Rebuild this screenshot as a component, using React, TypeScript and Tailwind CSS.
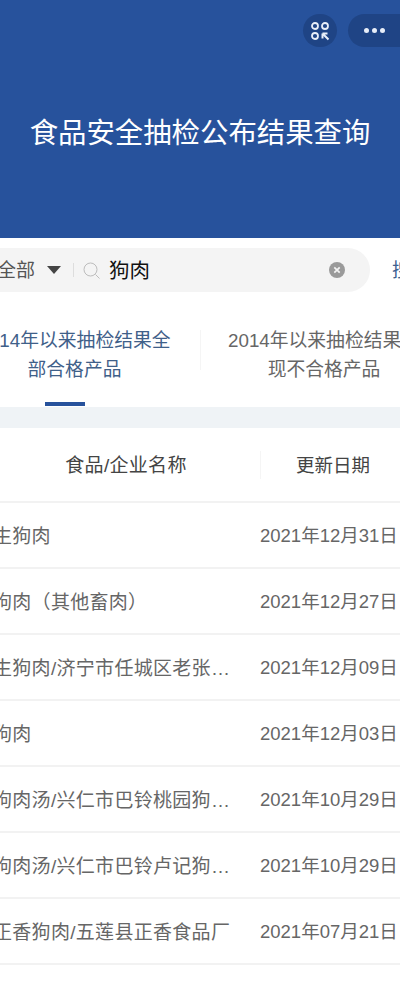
const font = { fontFamily: '"Liberation Sans", "Noto Sans CJK SC", sans-serif' };

const rows: [string, string][] = [
  ["生狗肉", "2021年12月31日"],
  ["狗肉（其他畜肉）", "2021年12月27日"],
  ["生狗肉/济宁市任城区老张…", "2021年12月09日"],
  ["狗肉", "2021年12月03日"],
  ["狗肉汤/兴仁市巴铃桃园狗…", "2021年10月29日"],
  ["狗肉汤/兴仁市巴铃卢记狗…", "2021年10月29日"],
  ["正香狗肉/五莲县正香食品厂", "2021年07月21日"],
];

export default function App() {
  return (
    <div className="w-[400px] h-[982px] overflow-hidden bg-white" style={font}>
      <header className="h-[238px] bg-[#27529c] flex flex-col">
        <div className="flex justify-end pt-[14px] gap-[11px]">
          <div className="w-[34px] h-[33px] rounded-full bg-[#1f4485] flex items-center justify-center">
            <svg width="20" height="20" viewBox="0 0 20 20" fill="none" stroke="#e8eef8" strokeWidth="1.8">
              <circle cx="5" cy="5" r="3" />
              <circle cx="15" cy="5" r="3" />
              <circle cx="5" cy="15" r="3" />
              <path d="M12.5 12.5h5M12.5 12.5v5M13 13l5.5 5.5" strokeWidth="2" />
            </svg>
          </div>
          <div className="w-[70px] h-[33px] -mr-[18px] rounded-full bg-[#1f4485] flex items-center pl-[16px] gap-[3px] shrink-0">
            <span className="w-[5px] h-[5px] rounded-full bg-[#e8eef8]" />
            <span className="w-[5px] h-[5px] rounded-full bg-[#e8eef8]" />
            <span className="w-[5px] h-[5px] rounded-full bg-[#e8eef8]" />
            <span className="ml-[12px] w-px h-[18px] bg-[#3a5f9e]" />
          </div>
        </div>
        <h1 className="mt-[66px] text-center text-white text-[28.4px] leading-[40px] font-normal whitespace-nowrap">
          食品安全抽检公布结果查询
        </h1>
      </header>

      <div className="pt-[10px] flex items-center whitespace-nowrap">
        <div className="-ml-[30px] w-[400px] shrink-0 h-[44px] rounded-full bg-[#f4f4f4] flex items-center pl-[27px]">
          <span className="pt-[3px] text-[19px] text-[#555]">全部</span>
          <svg className="ml-[12px]" width="14" height="8" viewBox="0 0 14 8">
            <path d="M0 0h14L7 8z" fill="#444" />
          </svg>
          <span className="ml-[12px] w-px h-[14px] bg-[#ddd]" />
          <svg className="ml-[9px]" width="17" height="17" viewBox="0 0 17 17" fill="none" stroke="#bdbdbd" strokeWidth="1">
            <circle cx="7.5" cy="7.5" r="6.5" />
            <path d="M12.5 12.5l4 4" />
          </svg>
          <span className="ml-[9px] pt-[3px] text-[20.5px] text-[#111]">狗肉</span>
          <svg className="ml-auto mr-[25px]" width="16" height="16" viewBox="0 0 16 16">
            <circle cx="8" cy="8" r="8" fill="#9a9a9a" />
            <path d="M5.3 5.3l5.4 5.4M10.7 5.3l-5.4 5.4" stroke="#f4f4f4" strokeWidth="1.7" />
          </svg>
        </div>
        <span className="ml-[22px] pt-[3px] text-[19px] text-[#3d6190] shrink-0">搜索</span>
      </div>

      <div className="h-[115px] pt-[34px]">
        <div className="flex -ml-[26px] w-[446px] text-[18.8px] leading-[29px] h-[58px]">
          <div className="w-[201px] shrink-0 text-center text-[#3f6089]">
            <div className="whitespace-nowrap">2014年以来抽检结果全</div>
            <div>部合格产品</div>
          </div>
          <span className="ml-[25px] mt-[4px] w-px h-[40px] bg-[#f5f5f5] shrink-0" />
          <div className="ml-[27px] w-[192px] shrink-0 text-center text-[#666]">
            <div className="whitespace-nowrap">2014年以来抽检结果出</div>
            <div>现不合格产品</div>
          </div>
        </div>
        <div className="ml-[45px] mt-[18px] w-[40px] h-[4px] bg-[#27529c]" />
      </div>

      <div className="h-[21px] bg-[#eff3f6]" />

      <div className="h-[75px] flex items-center border-b-2 border-[#f2f2f2] text-[18.5px] text-[#444]">
        <div className="w-[252px] shrink-0 text-center text-[19px] tracking-[0.3px] pt-[4px]">食品/企业名称</div>
        <span className="ml-[8px] w-px h-[28px] bg-[#f5f5f5]" />
        <div className="ml-[35px] whitespace-nowrap pt-[2px]">更新日期</div>
      </div>

      {rows.map(([name, date], i) => (
        <div key={i} className="h-[66px] flex items-center border-b-2 border-[#f2f2f2] text-[18.5px] text-[#666] whitespace-nowrap">
          <div className="-ml-[7px] w-[267px] shrink-0 text-[19px] tracking-[0.3px] pt-[5px]">{name}</div>
          <div className="pt-[1px]">{date}</div>
        </div>
      ))}
    </div>
  );
}
